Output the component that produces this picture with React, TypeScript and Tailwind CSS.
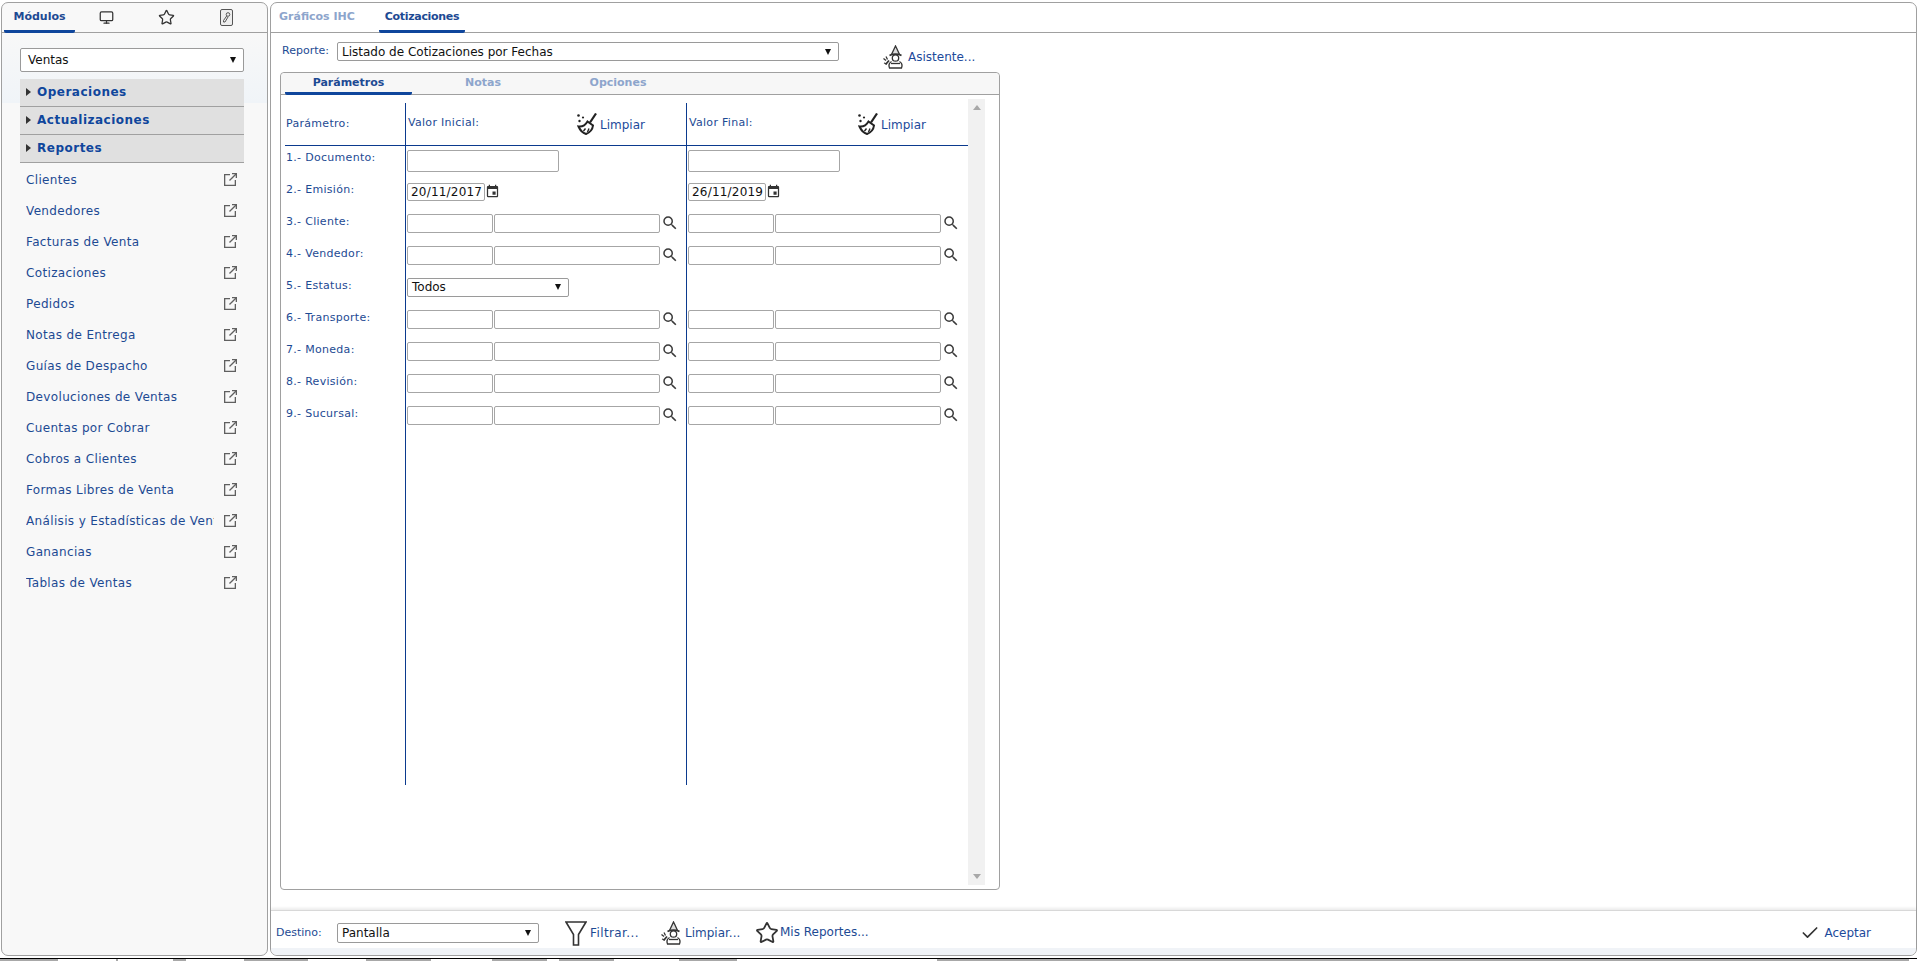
import { Check, Monitor, Star } from "lucide-react";
import { MdEvent, MdSearch } from "react-icons/md";

const font = "font-['DejaVu_Sans',Verdana,sans-serif]";

const links = [
  "Clientes",
  "Vendedores",
  "Facturas de Venta",
  "Cotizaciones",
  "Pedidos",
  "Notas de Entrega",
  "Guías de Despacho",
  "Devoluciones de Ventas",
  "Cuentas por Cobrar",
  "Cobros a Clientes",
  "Formas Libres de Venta",
  "Análisis y Estadísticas de Ventas",
  "Ganancias",
  "Tablas de Ventas",
];

const params = [
  { label: "3.- Cliente:", both: true },
  { label: "4.- Vendedor:", both: true },
  { label: "5.- Estatus:", both: false },
  { label: "6.- Transporte:", both: true },
  { label: "7.- Moneda:", both: true },
  { label: "8.- Revisión:", both: true },
  { label: "9.- Sucursal:", both: true },
];

// leftovers of the window behind the page, along the bottom edge
const strip = [58, 58, 2, 55, 13, 58, 64, 58, 65, 61, 55, 12, 55, 65, 58, 200, 972];

function Arrow() {
  return (
    <svg width="6" height="6" viewBox="0 0 6 6" className="shrink-0">
      <path d="M0 0h6L3 6z" fill="#111" />
    </svg>
  );
}

function Select({ value, className }: { value: string; className: string }) {
  return (
    <div className={`flex items-center justify-between rounded-[2px] border border-[#9a9a9a] bg-white pl-[4px] pr-[7px] text-[12px] text-[#111] ${className}`}>
      <span>{value}</span>
      <Arrow />
    </div>
  );
}

function LinkOut() {
  return (
    <svg width="13" height="13" viewBox="0 0 13 13" fill="none" stroke="#606060" strokeWidth="1.300" className="shrink-0">
      <path d="M6 1.650H.650v10.700h10.700V7" />
      <path d="M8 .650h4.350V5" />
      <path d="M12.300.700 5.500 7.500" />
    </svg>
  );
}

function Broom() {
  return (
    <svg width="20" height="22" viewBox="0 0 20 22" className="shrink-0">
      <circle cx="1.500" cy="2.500" r="1.300" fill="#222" />
      <circle cx="6" cy="4.500" r="1.100" fill="#222" />
      <circle cx="2.500" cy="8" r="1.200" fill="#222" />
      <path d="M19 .5 13 9.500" stroke="#222" strokeWidth="2.200" fill="none" />
      <path d="M10.500 8.500 16 12.500C15.500 16.500 13 19.500 9 21 6 20 3 17 1.500 13.500 5.500 14 8.500 12 10.500 8.500Z" fill="none" stroke="#222" strokeWidth="2" />
      <path d="M8.500 15.500 6.500 18M12 15.500 10.500 19" stroke="#222" strokeWidth="1.400" />
    </svg>
  );
}

function Wizard() {
  return (
    <svg width="22" height="24" viewBox="0 0 22 24" className="shrink-0" fill="none" stroke="#333" strokeWidth="1.300">
      <path d="M8.500 9.500 12.500 1l1.500 3 2.500 5.500" fill="#ddd" />
      <path d="M6.500 10.500c3-1.800 9-1.800 12 0" strokeWidth="1.700" />
      <circle cx="12.500" cy="13" r="3.200" />
      <path d="M8.500 16.500c-2.500 1.500-3 4-2 6.500h12c1-2.500.5-5-2-6.500" />
      <path d="M8 18.500h9" />
      <path d="M6 15.500 2.500 19.500" strokeWidth="1.800" />
      <path d="M.5 13.500 3 15.500M3 11.500 4.500 14.500M1 18l3 1" />
    </svg>
  );
}

function Filter() {
  return (
    <svg width="22" height="25" viewBox="0 0 22 25" className="shrink-0" fill="none" stroke="#333" strokeWidth="1.600">
      <path d="M1 1h20L13.500 13.500V24h-5V13.500z" />
    </svg>
  );
}

function KeyDoc() {
  return (
    <svg width="13" height="17" viewBox="0 0 13 17" fill="none" stroke="#555" strokeWidth="1">
      <rect x="0.500" y="0.500" width="12" height="16" rx="1.500" fill="#eee" />
      <circle cx="8" cy="5.500" r="1.800" />
      <path d="M6.700 7 3.500 11.500v1.500h1.500L8 8" />
    </svg>
  );
}

function LookupPair() {
  return (
    <div className="flex items-center gap-px">
      <input className="box-border h-[19px] w-[86px] rounded-[2px] border border-[#a6a6a6] bg-white" />
      <input className="box-border h-[19px] w-[166px] rounded-[2px] border border-[#a6a6a6] bg-white" />
      <MdSearch size={18} color="#3a3a3a" />
    </div>
  );
}

function DateField({ value }: { value: string }) {
  return (
    <div className="flex items-center">
      <input
        defaultValue={value}
        className="box-border h-[18px] w-[78px] rounded-[2px] border border-[#a6a6a6] bg-white pl-[3px] text-[12px] tracking-[0.2px] text-[#111]"
      />
      <MdEvent size={15} color="#333" />
    </div>
  );
}

function CleanHead({ title }: { title: string }) {
  return (
    <div className="box-border flex h-[43px] items-center border-b border-[#0b3a8e]">
      <span className="mt-[-2px] ml-[2px] w-[169px] text-[11px] tracking-[0.3px] text-[#1d4a93]">{title}</span>
      <Broom />
      <span className="ml-[3px] mt-[1px] text-[12px] text-[#1d4a9b]">Limpiar</span>
    </div>
  );
}

function Sidebar() {
  return (
    <aside className="box-border flex h-[954px] w-[267px] shrink-0 flex-col rounded-[7px] border border-[#a0a0a0] bg-[#f8f8f8]">
      <div className="flex h-[30px] items-end gap-[2px] border-b border-[#a0a0a0] px-[2px]">
        <div className="-mb-px flex h-[29px] w-[71px] items-center justify-center rounded-b-[2px] border-b-[3px] border-[#0f469c] pt-[1px] text-[11px] font-bold text-[#1d4a93]">
          Módulos
        </div>
        <div className="flex h-[29px] w-[58px] items-center justify-center">
          <Monitor size={15} color="#333" strokeWidth={2} />
        </div>
        <div className="flex h-[29px] w-[58px] items-center justify-center">
          <Star size={17} color="#333" strokeWidth={1.800} />
        </div>
        <div className="flex h-[29px] w-[58px] items-center justify-center">
          <KeyDoc />
        </div>
      </div>
      <div className="bg-[linear-gradient(#f8f8f8_0,#f0f4f8_54%,#f8f8f8_54%)] px-[18px] pt-[15px]">
        <Select value="Ventas" className="h-[24px] w-[224px] pl-[7px]" />
        <div className="mt-[7px] flex w-[224px] flex-col">
          {["Operaciones", "Actualizaciones", "Reportes"].map((item) => (
            <div
              key={item}
              className="flex h-[28px] items-center gap-[6px] border-b border-[#a0a0a0] bg-[#e0e0e0] pb-[2px] pl-[6px] text-[12px] font-bold tracking-[0.5px] text-[#0f469c]"
            >
              <svg width="5" height="8" viewBox="0 0 5 8">
                <path d="M0 0l5 4-5 4z" fill="#333" />
              </svg>
              {item}
            </div>
          ))}
        </div>
      </div>
      <ul className="ml-[24px] mt-[1px] w-[211px]">
        {links.map((link) => (
          <li key={link} className="flex h-[31px] items-center justify-between text-[12px] tracking-[0.35px] text-[#1d4a93]">
            <span className="w-[188px] overflow-hidden whitespace-nowrap">{link}</span>
            <LinkOut />
          </li>
        ))}
      </ul>
    </aside>
  );
}

function ValueColumn({ title, date, last }: { title: string; date: string; last: boolean }) {
  return (
    <div className={`box-border h-full border-l border-[#0b3a8e] ${last ? "w-[282px]" : "w-[281px]"}`}>
      <CleanHead title={title} />
      <div className="flex flex-col pl-[1px]">
        <div className="flex h-[30px] items-center">
          <input className="box-border h-[22px] w-[152px] rounded-[2px] border border-[#a6a6a6] bg-white" />
        </div>
        <div className="flex h-[31px] items-center">
          <DateField value={date} />
        </div>
        {params.map((p) => (
          <div key={p.label} className="flex h-[32px] items-center">
            {p.both ? (
              <LookupPair />
            ) : !last ? (
              <Select value="Todos" className="h-[19px] w-[162px]" />
            ) : null}
          </div>
        ))}
      </div>
    </div>
  );
}

function ParamTable() {
  return (
    <div className="mt-[4px] flex h-[682px] w-[683px]">
      <div className="flex w-[120px] flex-col text-[11px] tracking-[0.3px] text-[#1d4a93]">
        <div className="box-border flex h-[43px] items-center border-b border-[#0b3a8e] pl-[1px]">Parámetro:</div>
        <div className="flex h-[30px] items-center pb-[6px] pl-[1px]">1.- Documento:</div>
        <div className="flex h-[31px] items-center pb-[3px] pl-[1px]">2.- Emisión:</div>
        {params.map((p) => (
          <div key={p.label} className="flex h-[32px] items-center pb-[2px] pl-[1px]">{p.label}</div>
        ))}
      </div>
      <ValueColumn title="Valor Inicial:" date="20/11/2017" last={false} />
      <ValueColumn title="Valor Final:" date="26/11/2019" last />
    </div>
  );
}

function ReportPanel() {
  return (
    <div className="ml-[9px] mt-[11px] box-border h-[818px] w-[720px] rounded-[4px] border border-[#a0a0a0]">
      <div className="flex h-[22px] items-end rounded-t-[4px] border-b border-[#a0a0a0] bg-[#f7f7f7] pl-[4px] text-[11px] font-bold">
        <div className="-mb-px flex h-[21px] w-[127px] items-center justify-center rounded-b-[2px] border-b-[3px] border-[#0f469c] pt-[1px] text-[#1d4a93]">Parámetros</div>
        <div className="flex h-[21px] w-[142px] items-center justify-center pb-[1px] text-[#8da5cc]">Notas</div>
        <div className="flex h-[21px] w-[128px] items-center justify-center pb-[1px] text-[#8da5cc]">Opciones</div>
      </div>
      <div className="flex pl-[4px] pt-[4px]">
        <ParamTable />
        <div className="flex h-[786px] w-[17px] shrink-0 flex-col items-center justify-between bg-[#f1f1f1] py-[6px]">
          <svg width="8" height="5" viewBox="0 0 8 5"><path d="M4 0l4 5H0z" fill="#a8a8a8" /></svg>
          <svg width="8" height="5" viewBox="0 0 8 5"><path d="M0 0h8L4 5z" fill="#a8a8a8" /></svg>
        </div>
      </div>
    </div>
  );
}

function FooterBar() {
  return (
    <div className="mt-auto flex h-[45px] items-center justify-between rounded-b-[7px] border-t border-[#d8d8d8] bg-[linear-gradient(#fff_0,#fff_85%,#f0f3f7_85%)] pl-[5px] pr-[45px] shadow-[0_-2px_3px_rgba(0,0,0,0.08)]">
      <div className="flex items-center text-[12px] text-[#1d4a93]">
        <span className="w-[61px] text-[11px]">Destino:</span>
        <Select value="Pantalla" className="h-[20px] w-[202px]" />
        <span className="ml-[26px]"><Filter /></span>
        <span className="ml-[3px] w-[71px] tracking-[0.4px]">Filtrar...</span>
        <Wizard />
        <span className="ml-[2px] w-[70px]">Limpiar...</span>
        <Star size={24} color="#333" strokeWidth={1.800} />
        <span className="mb-[3px] ml-[1px]">Mis Reportes...</span>
      </div>
      <div className="flex items-center gap-[4px] text-[12px] text-[#1d4a9b]">
        <Check size={20} color="#333" strokeWidth={2} />
        Aceptar
      </div>
    </div>
  );
}

function MainPanel() {
  return (
    <main className="box-border flex h-[954px] flex-1 flex-col rounded-[7px] border border-[#a0a0a0] bg-white">
      <div className="flex h-[30px] shrink-0 items-end border-b border-[#a0a0a0] text-[11px] font-bold">
        <div className="flex h-[29px] w-[108px] items-center pb-[1px] pl-[8px] text-[#8da5cc]">Gráficos IHC</div>
        <div className="-mb-px flex h-[29px] w-[86px] items-center justify-center rounded-b-[2px] border-b-[3px] border-[#0f469c] pt-[1px] tracking-[-0.3px] text-[#1d4a93]">Cotizaciones</div>
      </div>
      <div className="mt-[9px] flex h-[19px] shrink-0 items-start pl-[11px]">
        <span className="w-[55px] pt-[1px] text-[11px] text-[#1d4a93]">Reporte:</span>
        <Select value="Listado de Cotizaciones por Fechas" className="h-[19px] w-[502px]" />
        <div className="ml-[44px] mt-[3px] flex items-center gap-[3px] text-[12px] text-[#1d4a9b]">
          <Wizard />
          Asistente...
        </div>
      </div>
      <ReportPanel />
      <FooterBar />
    </main>
  );
}

export default function App() {
  return (
    <div className={`box-border flex h-[961px] w-[1917px] flex-col overflow-hidden bg-white ${font}`}>
      <div className="flex gap-[2px] pl-[1px] pt-[2px]">
        <Sidebar />
        <MainPanel />
      </div>
      <div className="mt-[2px] h-px shrink-0 bg-black" />
      <div className="flex h-[2px] shrink-0">
        {strip.map((w, i) => (
          <span key={i} style={{ width: w }} className={i % 2 === 0 ? "bg-[#a8a8a8]" : "bg-white"} />
        ))}
      </div>
    </div>
  );
}
